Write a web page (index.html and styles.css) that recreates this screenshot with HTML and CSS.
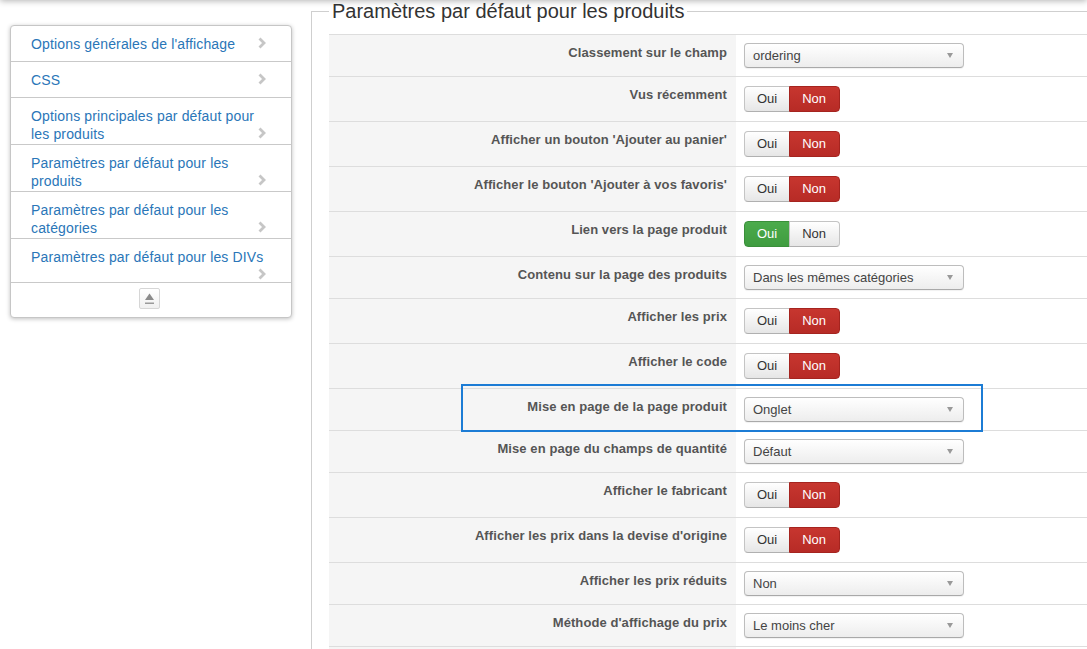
FILE: index.html
```html
<!DOCTYPE html>
<html lang="fr">
<head>
    <meta charset="UTF-8">
    <title>Paramètres par défaut pour les produits</title>
    <link rel="stylesheet" href="styles.css">
</head>
<body>

<div class="topbar"></div>

<div class="page">
    <div class="sidebar">
        <ul class="nav-list">
            <li><a href="#">Options générales de l'affichage</a><span class="chevron"><svg width="12" height="14" viewBox="0 0 12 14"><path d="M3.5 2.5 L8 7 L3.5 11.5" /></svg></span></li>
            <li><a href="#">CSS</a><span class="chevron"><svg width="12" height="14" viewBox="0 0 12 14"><path d="M3.5 2.5 L8 7 L3.5 11.5" /></svg></span></li>
            <li><a href="#">Options principales par défaut pour les produits</a><span class="chevron"><svg width="12" height="14" viewBox="0 0 12 14"><path d="M3.5 2.5 L8 7 L3.5 11.5" /></svg></span></li>
            <li><a href="#">Paramètres par défaut pour les produits</a><span class="chevron"><svg width="12" height="14" viewBox="0 0 12 14"><path d="M3.5 2.5 L8 7 L3.5 11.5" /></svg></span></li>
            <li><a href="#">Paramètres par défaut pour les catégories</a><span class="chevron"><svg width="12" height="14" viewBox="0 0 12 14"><path d="M3.5 2.5 L8 7 L3.5 11.5" /></svg></span></li>
            <li><a href="#">Paramètres par défaut pour les DIVs</a><span class="chevron"><svg width="12" height="14" viewBox="0 0 12 14"><path d="M3.5 2.5 L8 7 L3.5 11.5" /></svg></span></li>
            <li class="nav-foot">
                <span class="eject-btn">
                    <svg width="19" height="19" viewBox="0 0 19 19"><polygon points="9.5,4.5 14,11 5,11" fill="#8a8a8a"/><rect x="5" y="13.5" width="9" height="1.5" fill="#9a9a9a"/></svg>
                </span>
            </li>
        </ul>
    </div>

    <div class="content">
        <fieldset class="settings">
            <legend>Paramètres par défaut pour les produits</legend>

            <div class="form-table">
                <div class="field">
                    <div class="field-label">Classement sur le champ</div>
                    <div class="field-value"><div class="select">ordering</div></div>
                </div>
                <div class="field">
                    <div class="field-label">Vus récemment</div>
                    <div class="field-value"><div class="toggle"><span>Oui</span><span class="no active">Non</span></div></div>
                </div>
                <div class="field">
                    <div class="field-label">Afficher un bouton 'Ajouter au panier'</div>
                    <div class="field-value"><div class="toggle"><span>Oui</span><span class="no active">Non</span></div></div>
                </div>
                <div class="field">
                    <div class="field-label">Afficher le bouton 'Ajouter à vos favoris'</div>
                    <div class="field-value"><div class="toggle"><span>Oui</span><span class="no active">Non</span></div></div>
                </div>
                <div class="field">
                    <div class="field-label">Lien vers la page produit</div>
                    <div class="field-value"><div class="toggle"><span class="yes active">Oui</span><span>Non</span></div></div>
                </div>
                <div class="field">
                    <div class="field-label">Contenu sur la page des produits</div>
                    <div class="field-value"><div class="select">Dans les mêmes catégories</div></div>
                </div>
                <div class="field">
                    <div class="field-label">Afficher les prix</div>
                    <div class="field-value"><div class="toggle"><span>Oui</span><span class="no active">Non</span></div></div>
                </div>
                <div class="field">
                    <div class="field-label">Afficher le code</div>
                    <div class="field-value"><div class="toggle"><span>Oui</span><span class="no active">Non</span></div></div>
                </div>
                <div class="field">
                    <div class="field-label">Mise en page de la page produit</div>
                    <div class="field-value"><div class="select">Onglet</div></div>
                </div>
                <div class="field">
                    <div class="field-label">Mise en page du champs de quantité</div>
                    <div class="field-value"><div class="select">Défaut</div></div>
                </div>
                <div class="field">
                    <div class="field-label">Afficher le fabricant</div>
                    <div class="field-value"><div class="toggle"><span>Oui</span><span class="no active">Non</span></div></div>
                </div>
                <div class="field">
                    <div class="field-label">Afficher les prix dans la devise d'origine</div>
                    <div class="field-value"><div class="toggle"><span>Oui</span><span class="no active">Non</span></div></div>
                </div>
                <div class="field">
                    <div class="field-label">Afficher les prix réduits</div>
                    <div class="field-value"><div class="select">Non</div></div>
                </div>
                <div class="field">
                    <div class="field-label">Méthode d'affichage du prix</div>
                    <div class="field-value"><div class="select">Le moins cher</div></div>
                </div>
                <div class="field field-empty">
                    <div class="field-label"></div>
                    <div class="field-value"></div>
                </div>
            </div>
        </fieldset>
    </div>

    <!-- cadre de mise en évidence -->
    <div class="highlight"></div>
</div>

</body>
</html>
```

FILE: styles.css
```css
html, body {
    margin: 0;
    height: 100%;
    overflow: hidden;
    background: #fff;
}

body {
    font-family: "Liberation Sans", Arial, sans-serif;
    font-size: 13px;
    color: #333;
}

.topbar {
    position: fixed;
    top: -10px;
    left: 0;
    right: 0;
    height: 10px;
    box-shadow: 0 1px 6px rgba(0, 0, 0, 0.3);
    z-index: 5;
}

.page {
    display: flex;
    align-items: flex-start;
}

/* Menu de gauche */
.sidebar {
    flex: none;
    width: 282px;
    margin: 25px 19px 0 10px;
}

.nav-list {
    list-style: none;
    margin: 0;
    padding: 0;
    background: #fff;
    border: 1px solid #c6c6c6;
    border-radius: 4px;
    box-shadow: 0 1px 4px rgba(0, 0, 0, 0.25);
}

.nav-list li {
    padding: 10px 23px 1px 20px;
    min-height: 24px;
    line-height: 17.5px;
    font-size: 14px;
    letter-spacing: 0.15px;
    border-top: 1px solid #c9c9c9;
    overflow: hidden;
}

.nav-list li:first-child {
    border-top: 0;
}

.nav-list a {
    color: #2a76b8;
    text-decoration: none;
}

.chevron {
    float: right;
    width: 12px;
    height: 14px;
}

.chevron svg {
    display: block;
}

.chevron path {
    fill: none;
    stroke: #c6c6c6;
    stroke-width: 2.8;
}

.nav-list .nav-foot {
    padding: 5px 0 8px;
    min-height: 0;
    line-height: 0;
    text-align: center;
}

.eject-btn {
    display: inline-block;
    width: 19px;
    height: 19px;
    margin-left: -3px;
    border: 1px solid #d6d6d6;
    border-radius: 2px;
    background: linear-gradient(#fff, #f0f0f0);
}

.eject-btn svg {
    display: block;
}

/* Zone des paramètres */
.content {
    flex: 1;
    min-width: 0;
}

.settings {
    margin: 0 -40px 0 0;
    padding: 12px 0 0 17px;
    border: 1px solid #cfcfcf;
    border-bottom: 0;
}

.settings legend {
    padding: 0 3px;
    font-size: 20px;
    line-height: 22px;
    color: #333;
}

.form-table {
    border-top: 1px solid #ddd;
}

.field {
    display: grid;
    grid-template-columns: 407px 1fr;
    border-bottom: 1px solid #ddd;
}

.field-empty {
    height: 40px;
}

.field-label {
    background: #f5f5f5;
    padding: 9px 9px 0 8px;
    line-height: 18px;
    text-align: right;
    font-weight: bold;
    letter-spacing: 0.08px;
    color: #555;
}

.field-value {
    padding: 8px;
}

.select {
    box-sizing: border-box;
    width: 220px;
    height: 25px;
    padding: 0 10px 0 8px;
    display: flex;
    align-items: center;
    justify-content: space-between;
    border: 1px solid #bdbdbd;
    border-bottom-color: #a9a9a9;
    border-radius: 4px;
    background: linear-gradient(#ffffff, #ededed);
    box-shadow: 0 1px 1px rgba(0, 0, 0, 0.06);
    color: #444;
}

.select::after {
    content: "";
    border-left: 3.5px solid transparent;
    border-right: 3.5px solid transparent;
    border-top: 5px solid #999;
}

.toggle {
    display: inline-flex;
    margin: 1px 0;
}

.toggle span {
    padding: 4px 12px;
    line-height: 16px;
    border: 1px solid #c4c4c4;
    border-bottom-color: #b0b0b0;
    background: linear-gradient(#ffffff, #e6e6e6);
    color: #333;
}

.toggle span:first-child {
    border-radius: 4px 0 0 4px;
}

.toggle span:last-child {
    margin-left: -1px;
    padding-right: 13px;
    border-radius: 0 4px 4px 0;
}

.toggle .no.active {
    background: linear-gradient(#c7362f, #b72b26);
    border-color: #a5241f;
    color: #fff;
}

.toggle .yes.active {
    background: linear-gradient(#4cab4c, #3f9c40);
    border-color: #3a8f3a;
    color: #fff;
}

.highlight {
    position: absolute;
    left: 461px;
    top: 384px;
    width: 518px;
    height: 44px;
    border: 2px solid #1c7cd5;
}
```
